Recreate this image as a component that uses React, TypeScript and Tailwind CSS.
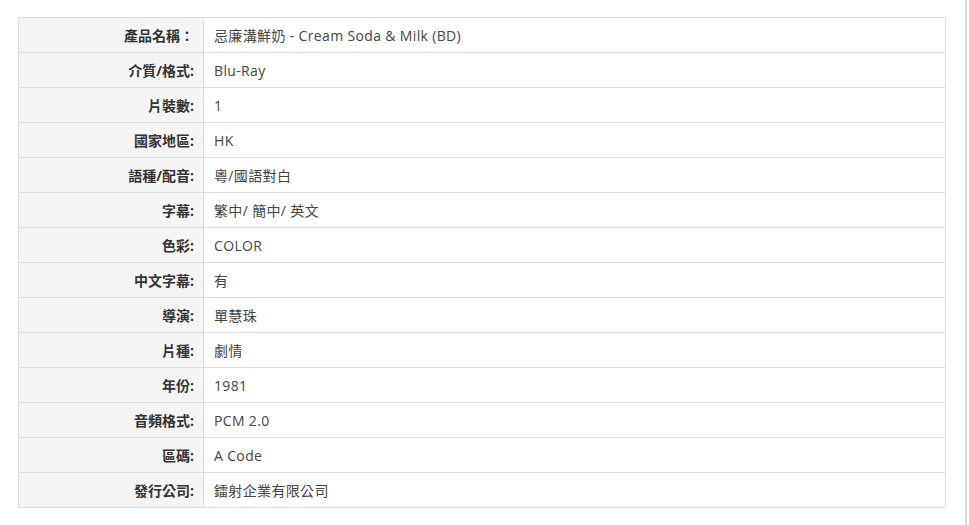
const rows: [string, string][] = [
  ['產品名稱：', '忌廉溝鮮奶 - Cream Soda & Milk (BD)'],
  ['介質/格式:', 'Blu-Ray'],
  ['片裝數:', '1'],
  ['國家地區:', 'HK'],
  ['語種/配音:', '粵/國語對白'],
  ['字幕:', '繁中/ 簡中/ 英文'],
  ['色彩:', 'COLOR'],
  ['中文字幕:', '有'],
  ['導演:', '單慧珠'],
  ['片種:', '劇情'],
  ['年份:', '1981'],
  ['音頻格式:', 'PCM 2.0'],
  ['區碼:', 'A Code'],
  ['發行公司:', '鐳射企業有限公司'],
];

export default function App() {
  return (
    <div
      className="h-[525px] w-[969px] bg-white"
      style={{ fontFamily: '"Open Sans", "Noto Sans CJK TC", sans-serif' }}
    >
      <div className="h-full w-[967px] border-r-2 border-[#d9d9d9] pl-[18px] pt-[17px]">
        <table className="w-[928px] border-collapse text-[14px]">
          <tbody>
            {rows.map(([label, value]) => (
              <tr key={label} className="h-[35px]">
                <th className="w-[185px] border border-[#dddddd] bg-[#f5f5f5] pr-[9px] text-right font-bold text-[#333]">
                  {label}
                </th>
                <td className="border border-[#dddddd] pl-[10px] text-left tracking-[0.025em] text-[#444]">
                  {value}
                </td>
              </tr>
            ))}
          </tbody>
        </table>
      </div>
    </div>
  );
}
